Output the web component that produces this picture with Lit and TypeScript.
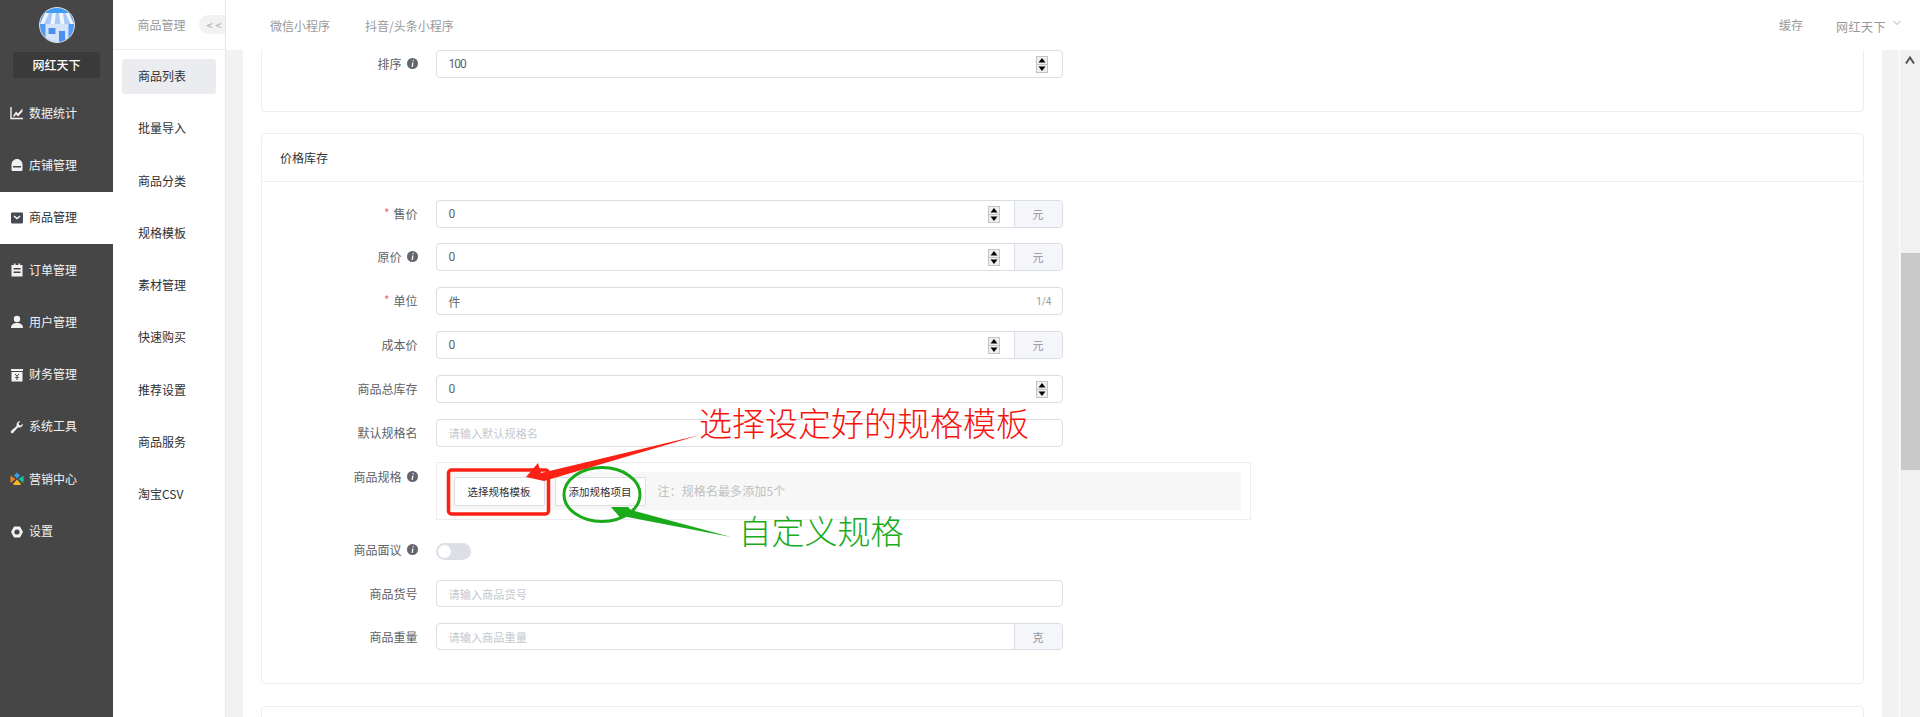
import { LitElement, html, css, svg } from "lit";
import { customElement } from "lit/decorators.js";

const ICONS: Record<string, unknown> = {
  chart: svg`<path d="M1 1v11.500h12" fill="none" stroke="currentColor" stroke-width="1.400"/><path d="M3 10 6 5.500l2 2L12.500 2.500v3L8 10.500 6 8.500 4 11z" fill="currentColor"/>`,
  shop: svg`<path d="M1.500 12V6.500C1.500 3.500 4 1 7 1s5.500 2.500 5.500 5.500V12a1 1 0 0 1-1 1h-9a1 1 0 0 1-1-1z" fill="currentColor"/><rect x="3" y="8" width="8" height="1.500" fill="#464646"/>`,
  goods: svg`<path d="M2 1.500h10a1 1 0 0 1 1 1V11a1.500 1.500 0 0 1-1.500 1.500h-9A1.500 1.500 0 0 1 1 11V2.500a1 1 0 0 1 1-1z" fill="currentColor"/><path d="M4 5l3 2.500L10 5" fill="none" stroke="#fff" stroke-width="1.500"/>`,
  order: svg`<path d="M1.500 2h11v11.500h-11z" fill="currentColor"/><rect x="4" y=".5" width="1.500" height="3" fill="currentColor"/><rect x="8.500" y=".5" width="1.500" height="3" fill="currentColor"/><rect x="3.500" y="5" width="7" height="1.500" fill="#464646"/><rect x="3.500" y="8.500" width="7" height="1.500" fill="#464646"/>`,
  user: svg`<circle cx="7" cy="4" r="3.200" fill="currentColor"/><path d="M1 13c0-3.500 2.500-5 6-5s6 1.500 6 5z" fill="currentColor"/>`,
  money: svg`<rect x="1" y="1" width="12" height="2" fill="currentColor"/><rect x="1.500" y="4" width="11" height="9.500" fill="currentColor"/><path d="M5 6l2 2.200L9 6M7 8.200V12M5.200 9.500h3.600" fill="none" stroke="#464646" stroke-width="1"/>`,
  tool: svg`<path d="M13 3.500a3.800 3.800 0 0 1-5 3.800L3.200 12.800a1.400 1.400 0 0 1-2-2L6.700 6A3.800 3.800 0 0 1 10.500 1L8.500 3.200 9 5l1.800.5z" fill="currentColor"/>`,
  market: svg`<path d="M7 .5l3 3-3 3-3-3z" fill="#39a0ee"/><path d="M.5 3.500 5.500 7 .5 11z" fill="#f5821f"/><path d="M13.500 3.500 8.500 7l5 4z" fill="#17c3a2"/><path d="M7 7.500l3 3.500a1 1 0 0 1-.5 2h-5a1 1 0 0 1-.5-2z" fill="#f7b52c"/>`,
  gear: svg`<path d="M4 1.500h6L13 7l-3 5.500H4L1 7z" fill="currentColor"/><circle cx="7" cy="7" r="2.600" fill="#464646"/>`,
};

const MENU: [string, string][] = [
  ["chart", "数据统计"], ["shop", "店铺管理"], ["goods", "商品管理"], ["order", "订单管理"], ["user", "用户管理"],
  ["money", "财务管理"], ["tool", "系统工具"], ["market", "营销中心"], ["gear", "设置"],
];
const SUB = ["商品列表", "批量导入", "商品分类", "规格模板", "素材管理", "快速购买", "推荐设置", "商品服务", "淘宝CSV"];

@customElement("app-root")
export class AppRoot extends LitElement {
  static styles = css`
    :host { display: flex; width: 1920px; height: 717px; overflow: hidden; background: #fff; position: relative;
      font-family: "Noto Sans CJK SC", "Noto Sans", sans-serif; font-size: 12px; color: #606266; }
    * { box-sizing: border-box; }
    .side { width: 113px; flex: none; background: #464646; display: flex; flex-direction: column; align-items: center; }
    .logo { width: 36px; height: 36px; margin-top: 7px; display: block; }
    .shop-name { width: 87px; height: 26px; margin-top: 9px; background: #3a3a3a; border-radius: 3px; color: #fff; font-weight: 500;
      display: flex; align-items: center; justify-content: center; line-height: 1; }
    .menu { width: 100%; margin-top: 9px; }
    .mi { height: 52.300px; display: flex; align-items: center; padding-left: 10px; gap: 5px; color: #f2f2f2; }
    .mi span { padding-bottom: 2px; }
    .mi svg { width: 14px; height: 14px; flex: none; }
    .mi.on { background: #fff; color: #303133; }
    .mi.on svg { color: #464a53; }
    .sub { width: 113px; flex: none; border-right: 1px solid #e8e8e8; display: flex; flex-direction: column; }
    .sub-head { height: 50px; flex: none; border-bottom: 1px solid #eceef2; display: flex; align-items: center; padding-left: 24.500px; color: #999; }
    .collapse { margin-left: 13px; width: 26px; height: 19px; flex: none; background: #f2f2f2; border-radius: 10px 0 0 10px; color: #aaa; font-size: 11px;
      display: flex; align-items: center; padding-left: 8px; letter-spacing: 3px; overflow: hidden; }
    .sub-list { padding: 9px 9px 0; display: flex; flex-direction: column; }
    .si { height: 35px; margin-bottom: 17.250px; border-radius: 3px; display: flex; align-items: center; padding: 0 0 2px 16px; color: #303133; width: 94px; }
    .si.on { background: #eaecf0; }
    .main { flex: 1; min-width: 0; display: flex; flex-direction: column; }
    .top { height: 50px; flex: none; display: flex; align-items: center; color: #999; padding-left: 44px; }
    .top .tab { margin-right: 35px; }
    .top .sp { flex: 1; }
    .top .cache { margin-right: 33px; margin-top: -2px; }
    .top .me { margin-top: 2px; letter-spacing: .5px; }
    .top .caret { width: 8px; height: 6px; margin: -4px 19px 0 7px; display: block; }
    .body { flex: 1; min-height: 0; display: flex; background: #f2f2f2; padding-left: 17px; }
    .page { width: 1639px; flex: none; background: #fff; padding: 0 18.500px 0 18px; overflow: hidden; }
    .fill { flex: 1; }
    .bar { width: 21px; flex: none; background: #f1f1f1; border-left: 1px solid #fff; display: flex; flex-direction: column; align-items: center; }
    .bar svg { width: 10px; height: 8px; margin-top: 6px; display: block; }
    .thumb { width: 19px; height: 217px; background: #c9c9c9; margin-top: 189px; }
    .card { border: 1px solid #eceef3; border-radius: 4px; }
    .c1 { height: 62px; border-top: none; border-radius: 0 0 4px 4px; margin-bottom: 21px; }
    .c2 { height: 551px; margin-bottom: 22px; }
    .c3 { height: 60px; }
    .title { height: 48px; border-bottom: 1px solid #eceef3; padding: 0 0 0 18px; display: flex; align-items: center; color: #333; }
    .form { padding-top: 18px; }
    .row { display: flex; align-items: center; height: 28px; margin-bottom: 16px; }
    .row.first { margin-bottom: 15px; }
    .c1 .row { margin: 0; }
    .lab { width: 155.500px; flex: none; margin-right: 18px; padding-bottom: 1px; display: flex; justify-content: flex-end; align-items: center; color: #606266; white-space: nowrap; }
    .req { color: #f56c6c; margin-right: 4px; font-size: 12px; line-height: 1; margin-top: -2px; }
    .info { width: 11px; height: 11px; margin-left: 5px; flex: none; display: block; }
    .ctl { width: 627px; height: 28px; flex: none; border: 1px solid #dcdee6; border-radius: 4px; display: flex; align-items: stretch; background: #fff; }
    .val { flex: 1; padding: 0 0 0 12px; display: flex; align-items: center; color: #606266; }
    .num { font-family: Roboto, sans-serif; letter-spacing: -1px; }
    .ph { color: #c6c8ce; font-size: 11.200px; padding-left: 12px; }
    .cnt { margin-right: 10px; align-self: center; color: #999; font-size: 10px; font-family: Roboto, sans-serif; }
    .spin { align-self: center; width: 12px; height: 17px; margin-right: 14px; flex: none; display: block; }
    .add { width: 48px; flex: none; background: #f5f6fa; border-left: 1px solid #dcdee6; border-radius: 0 4px 4px 0; display: flex; align-items: center; justify-content: center; color: #909399; font-size: 11px; }
    .row.tight { margin-bottom: 15px; }
    .row.spec { height: 58px; align-items: flex-start; margin-bottom: 23px; }
    .row.spec .lab { margin-top: 6px; }
    .specbox { width: 815px; height: 58px; flex: none; border: 1px solid #eeeef2; padding: 9px; }
    .spec-in { height: 38px; background: #f7f7f7; display: flex; align-items: center; padding-left: 8px; }
    .btn { width: 91px; height: 29px; background: #fff; border: 1px solid #dcdee6; border-radius: 2px; display: flex; align-items: center; justify-content: center; color: #303133; font-size: 10.500px; white-space: nowrap; margin-right: 10px; }
    .note { color: #c0c0c0; margin-left: 2px; letter-spacing: .1px; padding-bottom: 1px; }
    .row.tg { height: 17px; margin-bottom: 20px; }
    .row.tg .lab { margin-top: -3px; }
    .toggle { width: 35px; height: 17px; border-radius: 9px; background: #dcdfe6; position: relative; flex: none; }
    .toggle::after { content: ""; position: absolute; left: 2px; top: 2px; width: 13px; height: 13px; background: #fff; border-radius: 50%; }
    .row.h27 { height: 27px; margin-bottom: 16px; }
    .row.h27 .ctl { height: 27px; }
    .over { position: absolute; left: 0; top: 0; width: 1920px; height: 717px; pointer-events: none; }
    .over svg { position: absolute; left: 0; top: 0; }
    .anno { position: absolute; font-size: 33px; line-height: 1; white-space: nowrap; font-weight: 300; }
    .anno.red { left: 699px; top: 406px; color: #f5140e; }
    .anno.green { left: 738.500px; top: 514px; color: #19ab19; }
  `;

  private info() {
    return html`<svg class="info" viewBox="0 0 11 11"><circle cx="5.500" cy="5.500" r="5.500" fill="#63656c"/><path d="M5.700 2.100h1.100l-.2 1.200H5.500zM5.200 4.400h1.300l-.7 4.500H4.600z" fill="#fff"/></svg>`;
  }
  private spin() {
    return html`<svg class="spin" viewBox="0 0 12 17"><rect width="12" height="17" fill="#c4c4c4"/><rect x="1" y="1" width="10" height="7" fill="#efefef"/><rect x="1" y="9" width="10" height="7" fill="#efefef"/><path d="M6 2 9.500 6.500h-7z"/><path d="M6 15 2.500 10.500h7z"/></svg>`;
  }
  private lab(t: string, o: { req?: boolean; info?: boolean } = {}) {
    return html`<div class="lab">${o.req ? html`<span class="req">*</span>` : ""}${t}${o.info ? this.info() : ""}</div>`;
  }
  private numRow(t: string, v: string, o: { req?: boolean; info?: boolean; unit?: string; cls?: string } = {}) {
    return html`<div class="row ${o.cls ?? ""}">${this.lab(t, o)}<div class="ctl"><div class="val num">${v}</div>${this.spin()}${o.unit ? html`<div class="add">${o.unit}</div>` : ""}</div></div>`;
  }
  private phRow(t: string, p: string, unit = "") {
    return html`<div class="row h27">${this.lab(t)}<div class="ctl"><div class="val ph">${p}</div>${unit ? html`<div class="add">${unit}</div>` : ""}</div></div>`;
  }

  render() {
    return html`
      <aside class="side">
        <svg class="logo" viewBox="0 0 36 36">
          <defs>
            <linearGradient id="lg" x1="0" y1="0" x2="0" y2="1"><stop offset="0" stop-color="#3f9df5"/><stop offset="1" stop-color="#5a9cf0"/></linearGradient>
            <clipPath id="cc"><circle cx="18" cy="18" r="17"/></clipPath>
          </defs>
          <circle cx="18" cy="18" r="17.500" fill="url(#lg)" stroke="#dcdcdc" stroke-width="1"/>
          <g clip-path="url(#cc)">
            <path d="M6.500 16h23v20h-23z" fill="#d4e4fb"/>
            <path d="M6 6h24l5 11H1z" fill="#f1f5fd"/>
            <path d="M10 6h3.500l-2 11H5zM17 6h3l1.500 11h-6zM24 6h2.500l5 11h-6z" fill="#a9c9f8"/>
            <rect x="9.500" y="21" width="7" height="6" fill="#4a90ec"/>
            <rect x="20" y="24" width="6" height="11" fill="#4a90ec"/>
          </g>
        </svg>
        <div class="shop-name">网红天下</div>
        <div class="menu">
          ${MENU.map(([i, t]) => html`<div class="mi ${t === "商品管理" ? "on" : ""}"><svg viewBox="0 0 14 14">${ICONS[i]}</svg><span>${t}</span></div>`)}
        </div>
      </aside>
      <nav class="sub">
        <div class="sub-head"><span>商品管理</span><span class="collapse">&lt;&lt;</span></div>
        <div class="sub-list">${SUB.map((s, i) => html`<div class="si ${i === 0 ? "on" : ""}">${s}</div>`)}</div>
      </nav>
      <div class="main">
        <header class="top">
          <span class="tab">微信小程序</span><span class="tab">抖音/头条小程序</span><span class="sp"></span>
          <span class="cache">缓存</span><span class="me">网红天下</span>
          <svg class="caret" viewBox="0 0 8 6"><path d="M.5 1 4 4.500 7.500 1" fill="none" stroke="#aaa"/></svg>
        </header>
        <div class="body">
          <div class="page">
            <section class="card c1">
              <div class="row">${this.lab("排序", { info: true })}<div class="ctl"><div class="val num">100</div>${this.spin()}</div></div>
            </section>
            <section class="card c2">
              <div class="title">价格库存</div>
              <div class="form">
                ${this.numRow("售价", "0", { req: true, unit: "元", cls: "first" })}
                ${this.numRow("原价", "0", { info: true, unit: "元" })}
                <div class="row">${this.lab("单位", { req: true })}<div class="ctl"><div class="val">件</div><span class="cnt">1/4</span></div></div>
                ${this.numRow("成本价", "0", { unit: "元" })}
                ${this.numRow("商品总库存", "0")}
                <div class="row tight">${this.lab("默认规格名")}<div class="ctl"><div class="val ph">请输入默认规格名</div></div></div>
                <div class="row spec">${this.lab("商品规格", { info: true })}
                  <div class="specbox"><div class="spec-in"><div class="btn">选择规格模板</div><div class="btn">添加规格项目</div><div class="note">注：规格名最多添加5个</div></div></div>
                </div>
                <div class="row tg">${this.lab("商品面议", { info: true })}<div class="toggle"></div></div>
                ${this.phRow("商品货号", "请输入商品货号")}
                ${this.phRow("商品重量", "请输入商品重量", "克")}
              </div>
            </section>
            <section class="card c3"></section>
          </div>
          <div class="fill"></div>
          <div class="bar">
            <svg viewBox="0 0 10 8"><path d="M1 7.500 5 1.500l4 6" fill="none" stroke="#555" stroke-width="2"/></svg>
            <div class="thumb"></div>
          </div>
        </div>
      </div>
      <div class="over">
        <svg width="1920" height="717">
          <rect x="448.500" y="470" width="100" height="44" rx="3" fill="none" stroke="#fb2215" stroke-width="3.500"/>
          <ellipse cx="602" cy="494.500" rx="38" ry="27" fill="none" stroke="#1aaa1a" stroke-width="3"/>
          <path d="M700 435 541 473 538 463 526 477 544 481z" fill="#fb2215"/>
          <path d="M731 537 631 510 628 507 611 507 620 517.500 622 516z" fill="#1aaa1a"/>
        </svg>
        <div class="anno red">选择设定好的规格模板</div>
        <div class="anno green">自定义规格</div>
      </div>
    `;
  }
}
